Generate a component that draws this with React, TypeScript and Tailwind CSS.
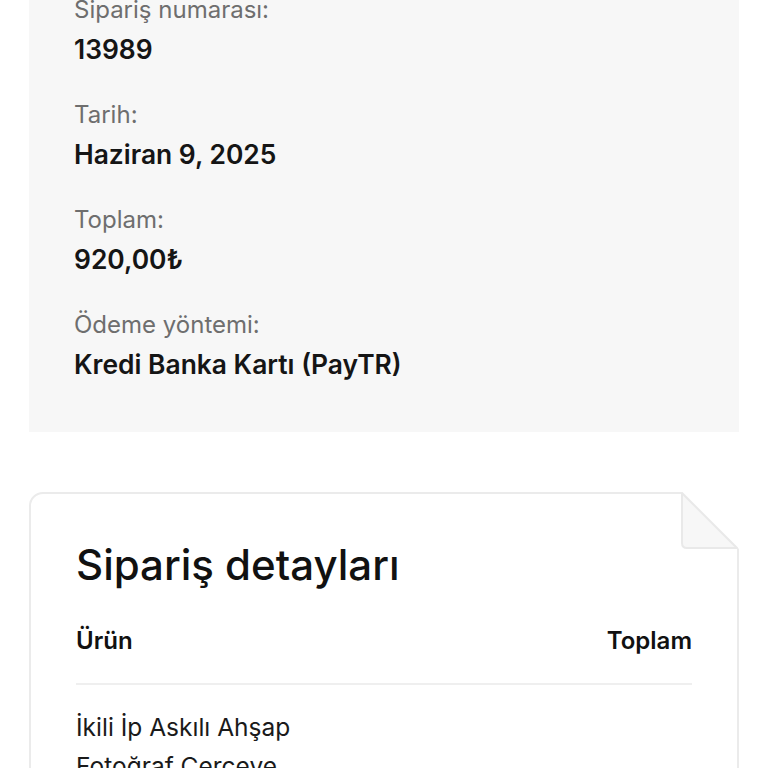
const font = { fontFamily: "Inter, 'Noto Sans', sans-serif" };

const details = [
  { label: "Sipariş numarası:", value: "13989" },
  { label: "Tarih:", value: "Haziran 9, 2025" },
  { label: "Toplam:", value: "920,00₺" },
  { label: "Ödeme yöntemi:", value: "Kredi Banka Kartı (PayTR)" },
];

function FoldedCorner() {
  return (
    <svg
      className="absolute -top-[2px] -right-[2px]"
      width="60"
      height="60"
      viewBox="0 0 60 60"
    >
      <polygon points="2,0 60,0 60,57" fill="#ffffff" />
      <path
        d="M3 1 L3 51 Q3 56 8 56 L58 56 Z"
        fill="#f7f7f7"
        stroke="#e9e9e9"
        strokeWidth="2"
        strokeLinejoin="round"
      />
    </svg>
  );
}

export default function App() {
  return (
    <div className="min-h-screen bg-white overflow-hidden" style={font}>
      <div className="mx-[29px] w-[710px] -mt-[45px] bg-[#f7f7f7] px-[45px] pt-[40px] pb-[53px]">
        {details.map((d, i) => (
          <div key={i} className={i > 0 ? "mt-[36px]" : ""}>
            <div className="text-[24px] leading-[30px] text-[#6e6e6e]">{d.label}</div>
            <div className="mt-[9px] text-[26.4px] leading-[30px] font-semibold text-[#151515]">
              {d.value}
            </div>
          </div>
        ))}
      </div>

      <div className="relative mx-[29px] mt-[60px] w-[710px] rounded-t-[14px] border-2 border-[#ebebeb] px-[45px] pt-[47px] pb-10">
        <FoldedCorner />
        <h2 className="text-[42px] leading-[48px] font-medium text-[#111]">
          Sipariş detayları
        </h2>
        <div className="mt-[37px] flex justify-between border-b-2 border-[#efefef] pb-[27px] text-[24px] leading-[30px] font-semibold text-[#111]">
          <span>Ürün</span>
          <span>Toplam</span>
        </div>
        <div className="mt-[23px] text-[24.5px] leading-[39px] text-[#1a1a1a]">
          <div>İkili İp Askılı Ahşap</div>
          <div>Fotoğraf Çerçeve</div>
        </div>
      </div>
    </div>
  );
}
